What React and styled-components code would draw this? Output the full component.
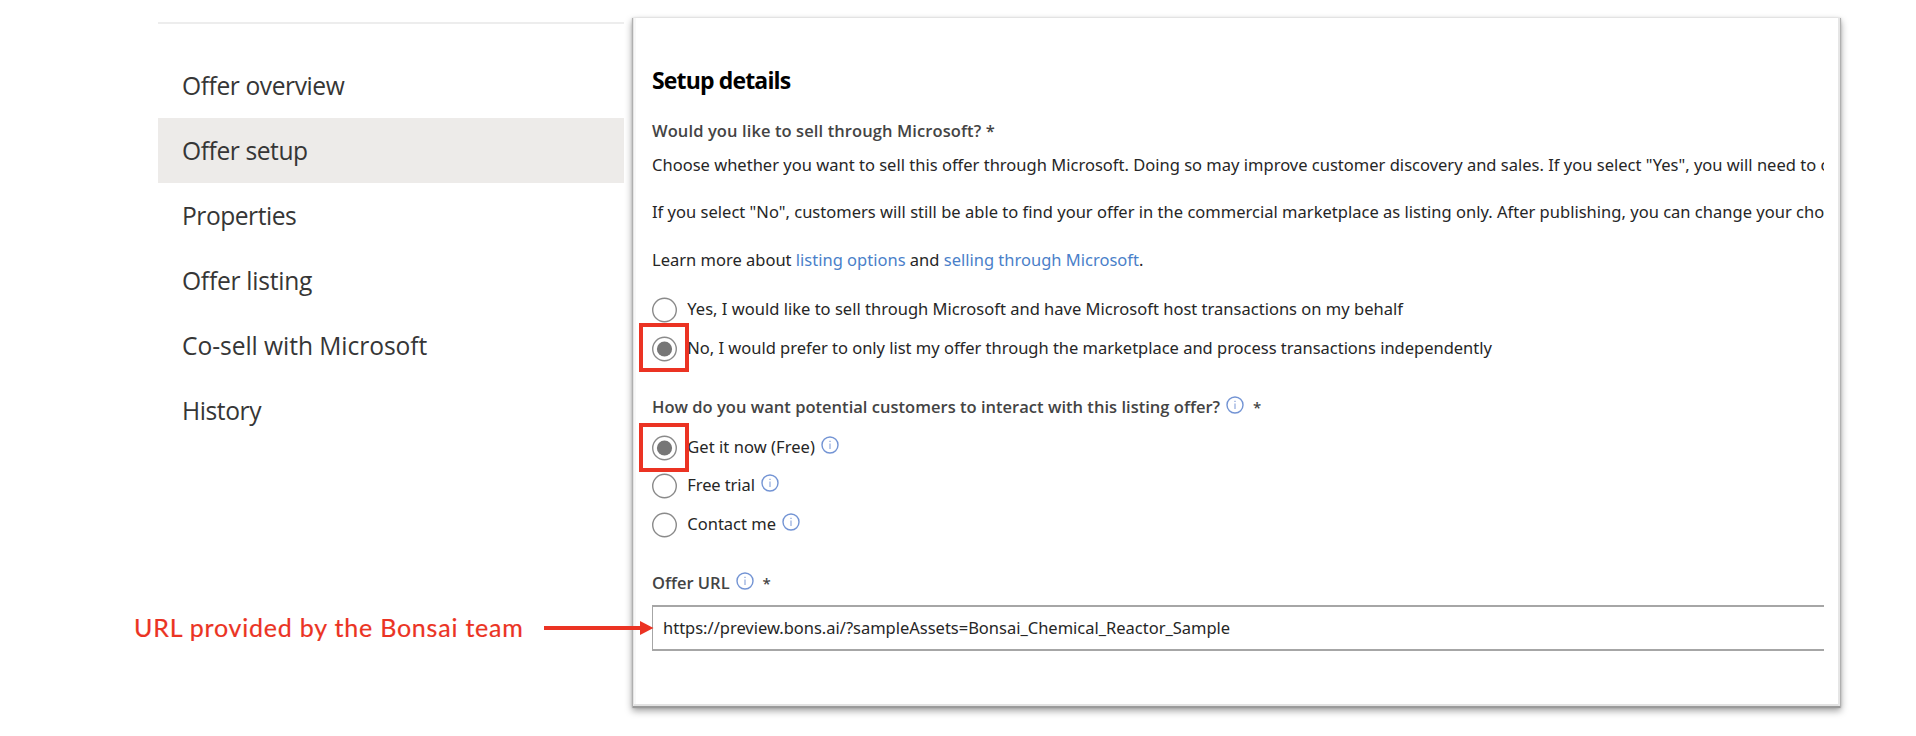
import React from "react";
import styled, { createGlobalStyle } from "styled-components";

const GlobalStyle = createGlobalStyle`
  * { box-sizing: border-box; }
  body { margin: 0; background: #fff; }
`;

const RED = "#eb3323";

const Page = styled.div`
  position: relative;
  display: flex;
  width: 1916px;
  height: 736px;
  overflow: hidden;
  background: #fff;
  font-family: "Noto Sans", "Open Sans", sans-serif;
  color: #262626;
`;

const LeftColumn = styled.div`
  display: flex;
  flex-direction: column;
  flex: 0 0 632px;
  padding-top: 22px;
`;

const Nav = styled.nav`
  width: 466px;
  margin-left: 158px;
  padding-top: 29px;
  border-top: 2px solid #ededed;
`;

const NavItem = styled.a`
  display: flex;
  align-items: center;
  height: 65.1px;
  padding: 0 0 0 24px;
  font-family: "Open Sans", sans-serif;
  font-size: 24.6px;
  line-height: 34px;
  letter-spacing: ${(p) => p.$tracking}px;
  color: #363636;
  white-space: nowrap;
  background: ${(p) => (p.$active ? "#edebe9" : "transparent")};
`;

const Annotation = styled.div`
  margin: 165.6px 0 0 134px;
  font-family: Lato, sans-serif;
  font-size: 25px;
  line-height: 36px;
  letter-spacing: 0.79px;
  -webkit-text-stroke: 0.2px ${RED};
  color: ${RED};
  white-space: nowrap;
`;

const Arrow = styled.svg`
  position: absolute;
  left: 544px;
  top: 620px;
`;

const Panel = styled.section`
  width: 1209px;
  height: 690px;
  margin-top: 18px;
  padding: 46px 17px 0 20px;
  background: #fff;
  box-shadow:
    inset 1px 0 0 #b0b0b0,
    inset -1px 0 0 #b0b0b0,
    inset 0 -2px 0 #9a9a9a,
    inset 2px 0 0 #e6e6e6,
    inset -3px 0 0 #e6e6e6,
    inset 0 -4px 0 #e2e2e2,
    inset 4px 0 0 #f8f8f8,
    0 0 2px rgba(0, 0, 0, 0.16),
    0 3px 7px rgba(0, 0, 0, 0.36);
`;

const Clip = styled.div`
  height: 620px;
  margin-left: -20px;
  padding-left: 20px;
  overflow: hidden;
  white-space: nowrap;
`;

const Title = styled.h2`
  margin: 0 0 23px;
  font-family: "Open Sans", sans-serif;
  font-size: 23px;
  line-height: 32px;
  font-weight: 700;
  letter-spacing: -0.85px;
  color: #000;
`;

const Label = styled.div`
  display: flex;
  align-items: center;
  height: 24px;
  margin-bottom: ${(p) => p.$gap}px;
  font-family: "Open Sans", sans-serif;
  font-size: 16.5px;
  line-height: 24px;
  font-weight: 600;
  letter-spacing: ${(p) => p.$tracking || 0}px;
  color: #444;
`;

const Star = styled.span`
  margin-left: ${(p) => p.$space}px;
  font-size: 15px;
  letter-spacing: 0;
`;

const Paragraph = styled.p`
  margin: 0 0 ${(p) => p.$gap}px;
  font-size: 16.5px;
  line-height: 24px;
  letter-spacing: ${(p) => p.$tracking || 0}px;
`;

const Link = styled.a`
  color: #4a7fc9;
`;

const RadioGroup = styled.div`
  margin-bottom: 27px;
`;

const RadioRow = styled.label`
  position: relative;
  display: flex;
  align-items: center;
  height: ${(p) => p.$height}px;
  font-size: 16.5px;
  line-height: 24px;
  letter-spacing: ${(p) => p.$tracking || 0}px;
`;

const RadioText = styled.span`
  margin-left: 10.3px;
  padding-bottom: 2px;
`;

const Highlight = styled.span`
  position: absolute;
  left: -13px;
  top: 50%;
  width: 50px;
  height: 49px;
  margin-top: ${(p) => p.$shift}px;
  border: 4px solid ${RED};
`;

const InfoSvg = styled.svg`
  flex: none;
  display: block;
  margin: 0 0 ${(p) => p.$lift}px 6px;
`;

const UrlInput = styled.div`
  width: 1300px;
  height: 46px;
  padding: 0 0 0 10px;
  border: 2px solid #a6a6a6;
  border-left-width: 1px;
  font-size: 16.5px;
  line-height: 42px;
  letter-spacing: -0.01px;
`;

function Radio({ checked }) {
  return (
    <svg width="25" height="26" viewBox="0 0 25 26" fill="none">
      <circle cx="12.5" cy="13" r="11.8" stroke="#8a8a8a" strokeWidth="1.4" />
      {checked && <circle cx="12.5" cy="13" r="7.6" fill="#767676" />}
    </svg>
  );
}

function Info({ lift = 6 }) {
  return (
    <InfoSvg $lift={lift} width="18" height="18" viewBox="0 0 18 18" fill="none">
      <circle cx="9" cy="9" r="8" stroke="#7394d4" strokeWidth="1.4" />
      <path d="M9 7.6V13" stroke="#8fa8dc" strokeWidth="1.2" />
      <path d="M9 4.8V6.1" stroke="#8fa8dc" strokeWidth="1.3" />
    </InfoSvg>
  );
}

const NAV = [
  { label: "Offer overview", tracking: -0.42 },
  { label: "Offer setup", tracking: -0.42, active: true },
  { label: "Properties", tracking: -0.48 },
  { label: "Offer listing", tracking: -0.26 },
  { label: "Co-sell with Microsoft", tracking: -0.06 },
  { label: "History", tracking: -0.4 },
];

export default function App() {
  return (
    <Page>
      <GlobalStyle />
      <LeftColumn>
        <Nav>
          {NAV.map((item) => (
            <NavItem key={item.label} $active={item.active} $tracking={item.tracking}>
              {item.label}
            </NavItem>
          ))}
        </Nav>
        <Annotation>URL provided by the Bonsai team</Annotation>
      </LeftColumn>

      <Panel>
        <Clip>
          <Title>Setup details</Title>
          <Label $gap={10} $tracking={0.1}>Would you like to sell through Microsoft? *</Label>
          <Paragraph $gap={23} $tracking={0.01}>
            Choose whether you want to sell this offer through Microsoft. Doing so may improve customer discovery and
            sales. If you select "Yes", you will need to complete
          </Paragraph>
          <Paragraph $gap={23.5} $tracking={0.015}>
            If you select "No", customers will still be able to find your offer in the commercial marketplace as listing
            only. After publishing, you can change your choice
          </Paragraph>
          <Paragraph $gap={19}>
            Learn more about <Link>listing options</Link> and <Link>selling through Microsoft</Link>.
          </Paragraph>

          <RadioGroup>
            <RadioRow $height={38.7} $tracking={0.015}>
              <Radio />
              <RadioText>Yes, I would like to sell through Microsoft and have Microsoft host transactions on my behalf</RadioText>
            </RadioRow>
            <RadioRow $height={38.7} $tracking={-0.015}>
              <Radio checked />
              <RadioText>No, I would prefer to only list my offer through the marketplace and process transactions independently</RadioText>
              <Highlight $shift={-26} />
            </RadioRow>
          </RadioGroup>

          <Label $gap={10} $tracking={0.02}>
            How do you want potential customers to interact with this listing offer?
            <Info lift={4} />
            <Star $space={9}>*</Star>
          </Label>
          <RadioGroup>
            <RadioRow $height={38.3} $tracking={0.05}>
              <Radio checked />
              <RadioText>Get it now (Free)</RadioText>
              <Info />
              <Highlight $shift={-24.6} />
            </RadioRow>
            <RadioRow $height={38.3} $tracking={-0.1}>
              <Radio />
              <RadioText>Free trial</RadioText>
              <Info />
            </RadioRow>
            <RadioRow $height={38.3}>
              <Radio />
              <RadioText>Contact me</RadioText>
              <Info lift={5} />
            </RadioRow>
          </RadioGroup>

          <Label $gap={10.3}>
            Offer URL
            <Info lift={4} />
            <Star $space={9}>*</Star>
          </Label>
          <UrlInput>https://preview.bons.ai/?sampleAssets=Bonsai_Chemical_Reactor_Sample</UrlInput>
        </Clip>
      </Panel>

      <Arrow width="110" height="16" viewBox="0 0 110 16">
        <path d="M0 8H98" stroke={RED} strokeWidth="4" />
        <path d="M96 1L109.5 8L96 15Z" fill={RED} />
      </Arrow>
    </Page>
  );
}
